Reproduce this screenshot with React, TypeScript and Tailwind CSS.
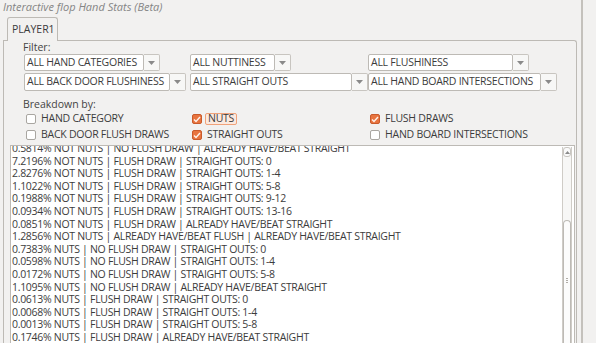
import React from 'react';

const ROWS = [
  '0.5814% NOT NUTS | NO FLUSH DRAW | ALREADY HAVE/BEAT STRAIGHT',
  '7.2196% NOT NUTS | FLUSH DRAW | STRAIGHT OUTS: 0',
  '2.8276% NOT NUTS | FLUSH DRAW | STRAIGHT OUTS: 1-4',
  '1.1022% NOT NUTS | FLUSH DRAW | STRAIGHT OUTS: 5-8',
  '0.1988% NOT NUTS | FLUSH DRAW | STRAIGHT OUTS: 9-12',
  '0.0934% NOT NUTS | FLUSH DRAW | STRAIGHT OUTS: 13-16',
  '0.0851% NOT NUTS | FLUSH DRAW | ALREADY HAVE/BEAT STRAIGHT',
  '1.2856% NOT NUTS | ALREADY HAVE/BEAT FLUSH | ALREADY HAVE/BEAT STRAIGHT',
  '0.7383% NUTS | NO FLUSH DRAW | STRAIGHT OUTS: 0',
  '0.0598% NUTS | NO FLUSH DRAW | STRAIGHT OUTS: 1-4',
  '0.0172% NUTS | NO FLUSH DRAW | STRAIGHT OUTS: 5-8',
  '1.1095% NUTS | NO FLUSH DRAW | ALREADY HAVE/BEAT STRAIGHT',
  '0.0613% NUTS | FLUSH DRAW | STRAIGHT OUTS: 0',
  '0.0068% NUTS | FLUSH DRAW | STRAIGHT OUTS: 1-4',
  '0.0013% NUTS | FLUSH DRAW | STRAIGHT OUTS: 5-8',
  '0.1746% NUTS | FLUSH DRAW | ALREADY HAVE/BEAT STRAIGHT',
];

function Combo({ label, w }: { label: string; w: string }) {
  return (
    <div className="flex h-full">
      <div className={`${w} h-full bg-white border border-[#bdbab5] rounded-[2px] pl-[2px] flex items-center text-[#3c3c3c] tracking-[-0.25px] whitespace-nowrap overflow-hidden`}>
        {label}
      </div>
      <div className="w-[16px] h-full bg-[#f7f7f6] border border-l-0 border-[#c8c5c0] rounded-r-[2px] flex items-center justify-center">
        <svg width="7" height="4" viewBox="0 0 7 4">
          <path d="M0 0 L7 0 L3.5 4 Z" fill="#8a8a8a" />
        </svg>
      </div>
    </div>
  );
}

function Check({ label, checked, focus }: { label: string; checked?: boolean; focus?: boolean }) {
  return (
    <div className="flex items-center h-[16px] tracking-[-0.25px]">
      {checked ? (
        <div className="w-[10px] h-[10px] rounded-[2px] bg-[#e8743f] border border-[#c95a2b] flex items-center justify-center">
          <svg width="8" height="7" viewBox="0 0 8 7">
            <path d="M1 3.5 L3 5.5 L7 1" stroke="#fff3ec" strokeWidth="1.4" fill="none" />
          </svg>
        </div>
      ) : (
        <div className="w-[10px] h-[10px] rounded-[2px] bg-white border border-[#a9a6a1]" />
      )}
      {focus ? (
        <span className="ml-[3px] px-[2px] h-[12px] flex items-center border border-[#f0a27a] rounded-[2px] bg-[#fbe9df] text-[#3c3c3c]">
          {label}
        </span>
      ) : (
        <span className="ml-[5px] text-[#3c3c3c]">{label}</span>
      )}
    </div>
  );
}

export default function App() {
  return (
    <div className="w-[596px] h-[343px] overflow-hidden bg-[#f2f1f0] flex text-[10.5px] font-['Open_Sans',sans-serif]">
      <div className="w-[581px] flex flex-col">
        <div className="h-[17px] pl-[3px] flex items-center italic text-[#858585] text-[11px] leading-[14px] -mt-[2px]">
          Interactive flop Hand Stats (Beta)
        </div>
        <div className="flex pl-[7px] h-[24px] mt-[2px]">
          <div className="w-[51px] h-[24px] border border-b-0 border-[#bdbab5] rounded-t-[3px] bg-[#f2f1f0] pl-[4px] flex items-center text-[#3c3c3c] relative z-10">
            PLAYER1
          </div>
        </div>
        <div className="ml-[3px] w-[574px] flex-1 -mt-[1px] border border-b-0 border-[#bdbab5] rounded-tr-[3px] flex flex-col min-h-0">
          <div className="pl-[19px] h-[13px] flex items-center text-[#444]">Filter:</div>
          <div className="pl-[20px] grid grid-cols-[166px_178px_auto] grid-rows-[17px_18px] gap-y-[2px]">
            <Combo label="ALL HAND CATEGORIES" w="w-[120px]" />
            <Combo label="ALL NUTTINESS" w="w-[85px]" />
            <Combo label="ALL FLUSHINESS" w="w-[145px]" />
            <Combo label="ALL BACK DOOR FLUSHINESS" w="w-[146px]" />
            <Combo label="ALL STRAIGHT OUTS" w="w-[162px]" />
            <Combo label="ALL HAND BOARD INTERSECTIONS" w="w-[173px]" />
          </div>
          <div className="pl-[19px] mt-[8px] h-[12px] flex items-center text-[#444]">Breakdown by:</div>
          <div className="pl-[22px] grid grid-cols-[166px_178px_auto]">
            <Check label="HAND CATEGORY" />
            <Check label="NUTS" checked focus />
            <Check label="FLUSH DRAWS" checked />
            <Check label="BACK DOOR FLUSH DRAWS" />
            <Check label="STRAIGHT OUTS" checked />
            <Check label="HAND BOARD INTERSECTIONS" />
          </div>
          <div className="ml-[6px] mr-[1px] mt-[2px] flex-1 min-h-0 bg-white border border-b-0 border-[#bdbab5] flex overflow-hidden">
            <div className="flex-1 overflow-hidden pl-[1px]">
              <div className="-mt-[4px] tracking-[-0.3px]">
                {ROWS.map((r) => (
                  <div key={r} className="h-[12.6px] leading-[12.6px] whitespace-nowrap text-[#3c3c3c]">
                    {r}
                  </div>
                ))}
              </div>
            </div>
            <div className="w-[10px] mr-[2px] mt-[1px] flex flex-col bg-[#f7f7f6] border-x border-[#cfccc7]">
              <div className="h-[10px] flex items-center justify-center border border-[#c8c5c0] rounded-[3px] bg-[#fafafa]">
                <svg width="5" height="3" viewBox="0 0 5 3">
                  <path d="M0 3 L2.5 0 L5 3 Z" fill="#8a8a8a" />
                </svg>
              </div>
              <div className="h-[63px]" />
              <div className="flex-1 border border-b-0 border-[#bdbab5] rounded-t-[4px] bg-[#fcfcfc] flex items-start justify-center pt-[57px]">
                <div className="w-[2px] h-[5px] border-y border-[#b0aca6] flex flex-col justify-center">
                  <div className="h-px bg-[#b0aca6]" />
                </div>
              </div>
            </div>
          </div>
        </div>
      </div>
      <div className="w-[2px] bg-[#c4c1bc]" />
      <div className="flex-1 bg-[#f2f1f0]" />
    </div>
  );
}
